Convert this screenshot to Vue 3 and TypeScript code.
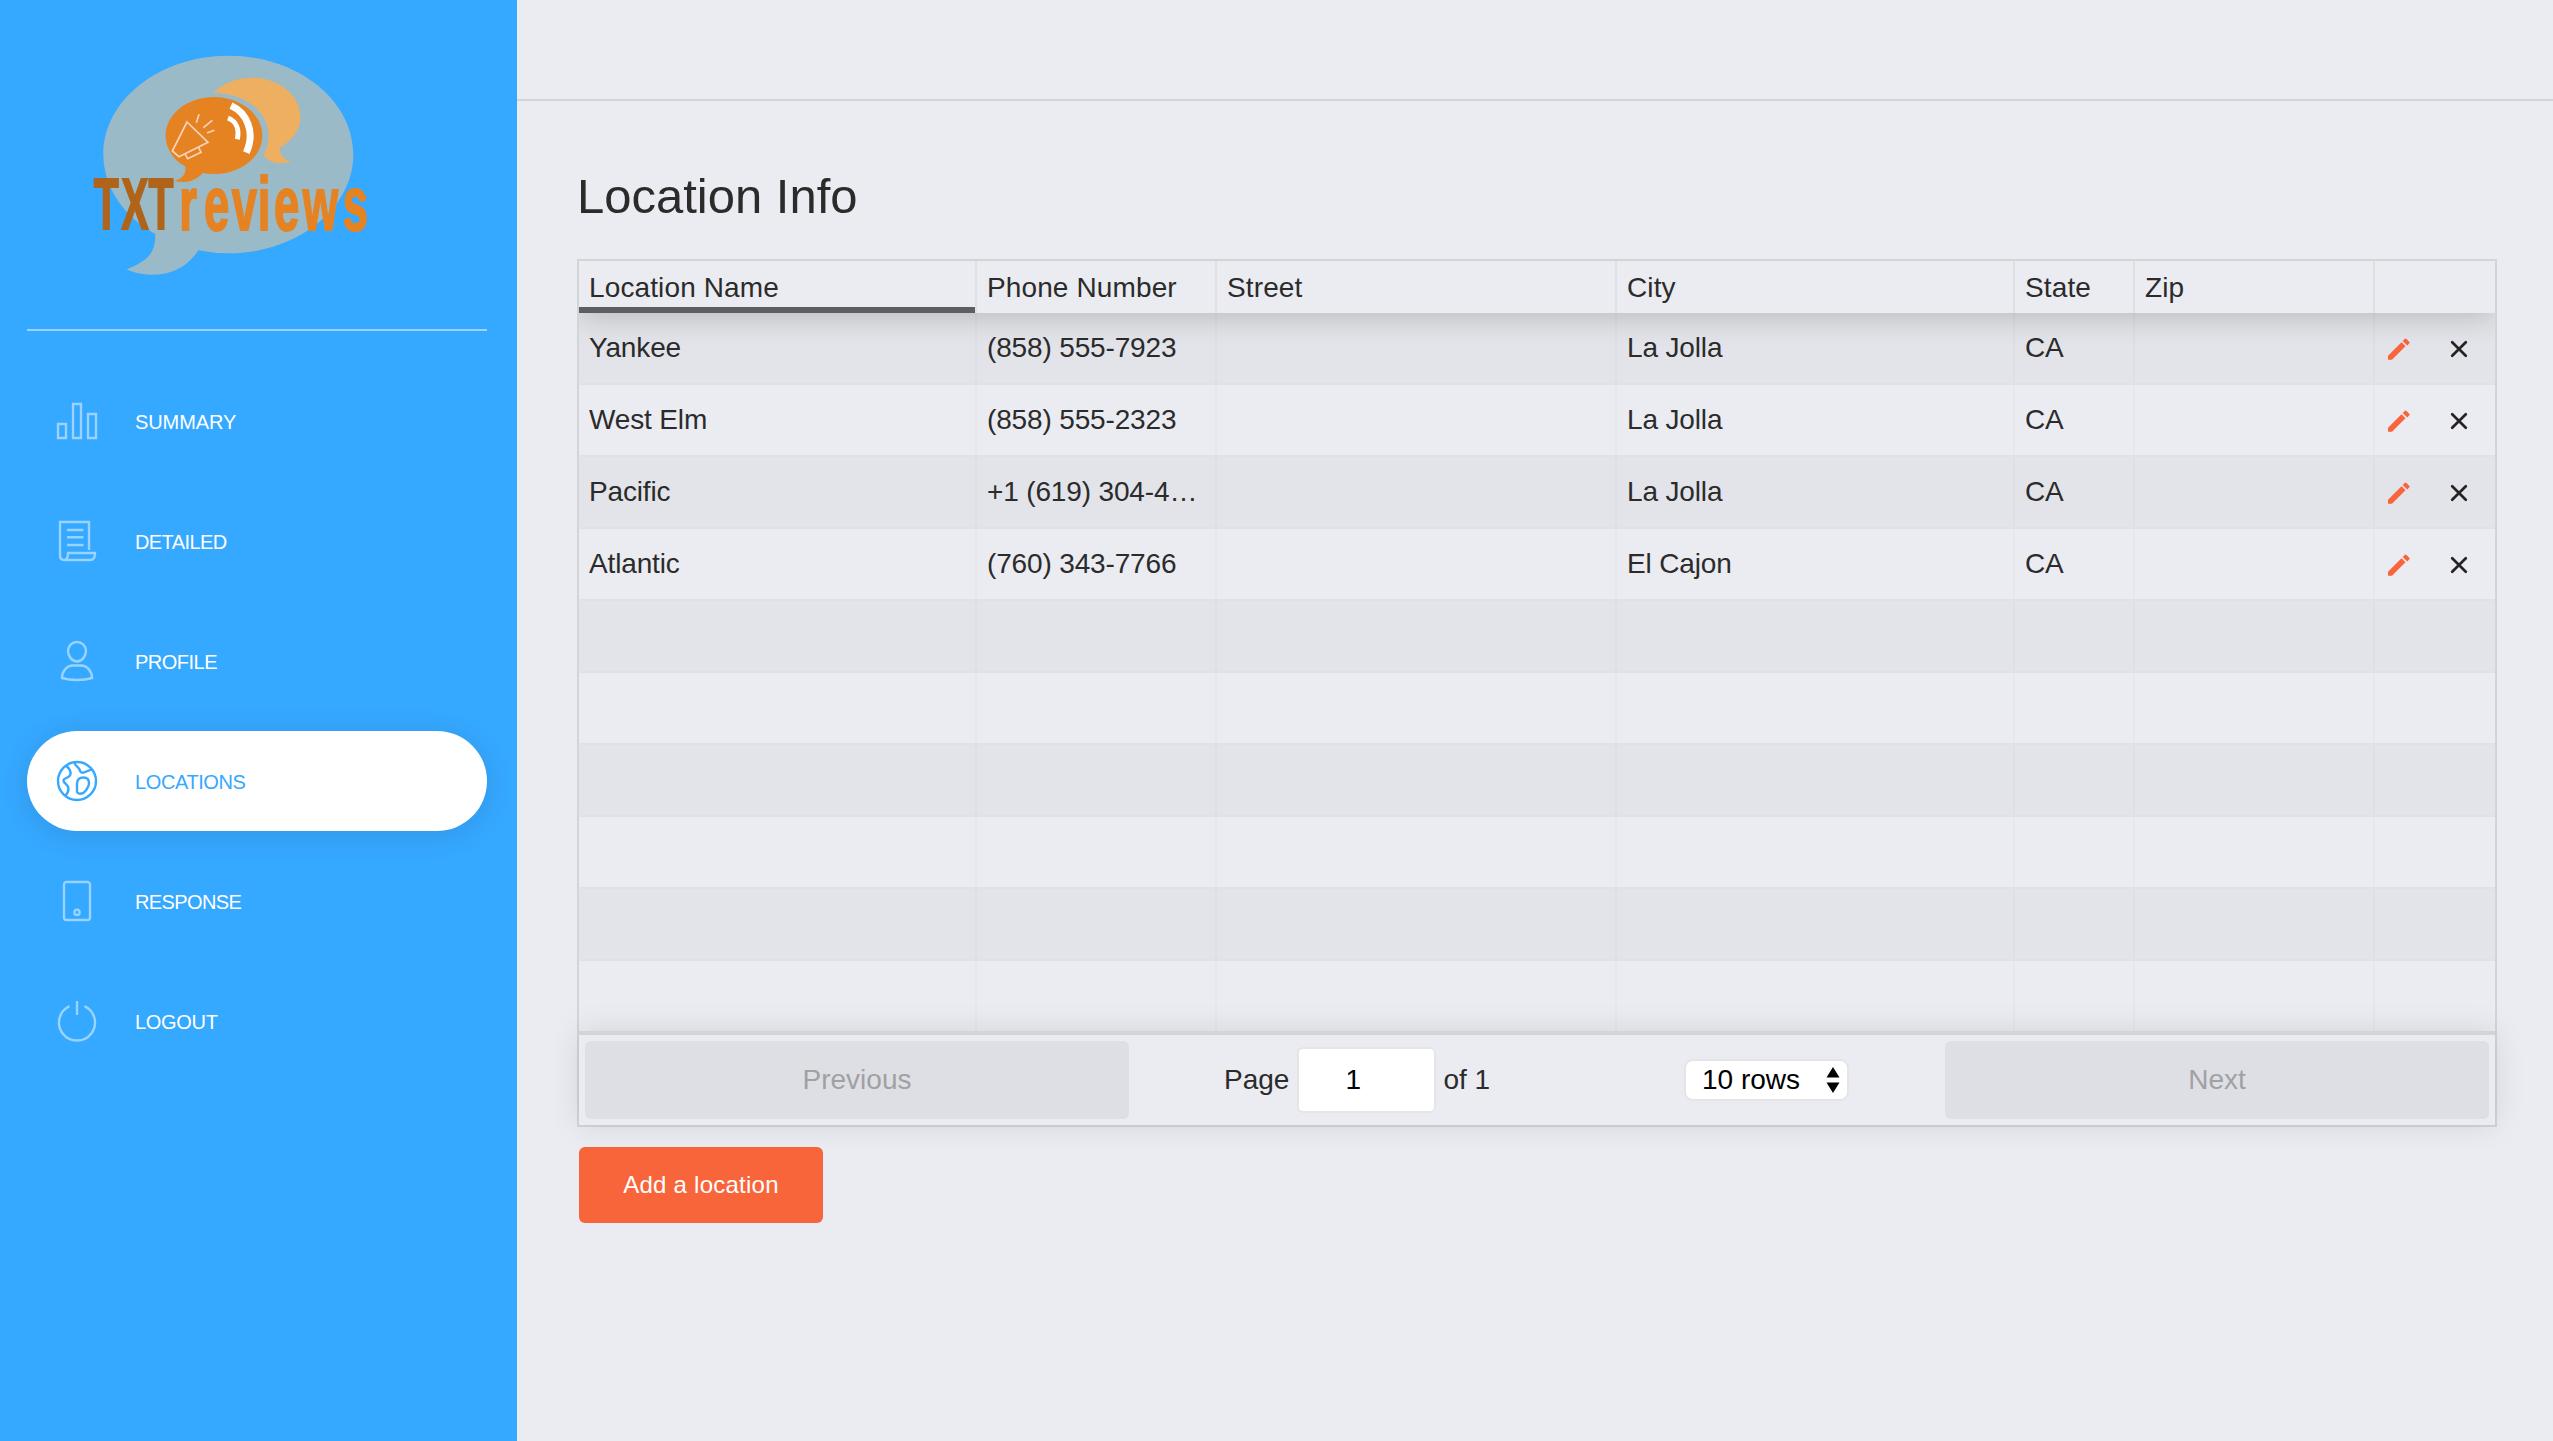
<script setup lang="ts">
interface NavItem {
  label: string
  paths: string[]
  spacing: number
  active?: boolean
}

interface Location {
  name: string
  phone: string
  street: string
  city: string
  state: string
  zip: string
}

const navItems: NavItem[] = [
  { label: 'SUMMARY', spacing: -0.1, paths: ['M1 23h8v14H1z', 'M16 3h8v34h-8z', 'M31 13h8v24h-8z'] },
  {
    label: 'DETAILED',
    spacing: -0.6,
    paths: [
      'M32 29V1H3v33c0 3 1.500 5 4 5s4-2 4-7h27c0 4-1.500 7-5 7H7',
      'M10 9h16.500M10 16.300h16.500M10 24h16.500',
    ],
  },
  {
    label: 'PROFILE',
    spacing: -0.5,
    paths: [
      'M20 1c5 0 9 4 9 9s-4 10.500-9 10.500S11 15 11 10s4-9 9-9z',
      'M5 37c0-7 5-12.500 11-12.500h8c6 0 11 5.500 11 12.500-5 1.500-10 2-15 2s-10-.500-15-2z',
    ],
  },
  {
    label: 'LOCATIONS',
    spacing: -0.4,
    active: true,
    paths: [
      'M20 1a19 19 0 1 1 0 38a19 19 0 1 1 0-38z',
      'M9.500 5c3 2.500 4.300 4.500 4 8-.300 4.500-7 3.500-7 6.500s5 4 5 8-1 5-3 7',
      'M17.500 2c.500 3 4 3.500 5 6.500 1 3 2 3.500 4 3l8-3',
      'M20 30V22.500c0-4 2.500-6 6.500-6s5.500 2.500 5.500 5.500-2 6-4 8.500c-2 2.500-8 3.500-8-.500z',
    ],
  },
  {
    label: 'RESPONSE',
    spacing: -0.6,
    paths: [
      'M9.500 1h21a2.500 2.500 0 0 1 2.500 2.500v33a2.500 2.500 0 0 1-2.500 2.500h-21A2.500 2.500 0 0 1 7 36.500v-33A2.500 2.500 0 0 1 9.500 1z',
      'M20 28.800a2.600 2.600 0 1 1 0 5.200a2.600 2.600 0 1 1 0-5.200z',
    ],
  },
  { label: 'LOGOUT', spacing: -0.3, paths: ['M12.500 5.200A18 18 0 1 0 27.500 5.200', 'M20 0v14'] },
]

const headers: string[] = ['Location Name', 'Phone Number', 'Street', 'City', 'State', 'Zip', '']

const locations: Location[] = [
  { name: 'Yankee', phone: '(858) 555-7923', street: '', city: 'La Jolla', state: 'CA', zip: '' },
  { name: 'West Elm', phone: '(858) 555-2323', street: '', city: 'La Jolla', state: 'CA', zip: '' },
  { name: 'Pacific', phone: '+1 (619) 304-4410', street: '', city: 'La Jolla', state: 'CA', zip: '' },
  { name: 'Atlantic', phone: '(760) 343-7766', street: '', city: 'El Cajon', state: 'CA', zip: '' },
]

const pageSize = 10
const emptyRows = pageSize - locations.length
</script>

<template>
  <div class="layout">
    <aside class="sidebar">
      <div class="brand">
        <svg class="logo" viewBox="0 0 960 750" width="320" height="250">
          <path
            fill="#9abac7"
            d="M475 47C682 47 850 180 850 343S682 640 475 640Q428 640 385 631C345 690 295 704 245 704C218 704 190 698 170 688C235 661 256 640 256 582C160 530 100 440 100 343C100 180 268 47 475 47z"
          />
          <path
            fill="#efaf60"
            d="M430 158C462 128 503 113 546 113C626 113 691 165 691 231C691 267 671 298 629 324C630 345 641 358 662 363C634 376 599 370 581 346C594 322 597 297 595 275C588 208 520 160 430 158z"
          />
          <path
            fill="#e58323"
            d="M432 171C512 171 577 223 577 287S512 402 432 402Q414 402 398 399C376 424 350 430 314 423C340 413 348 403 346 379C308 359 287 323 287 287C287 223 352 171 432 171z"
          />
          <path fill="none" stroke="#f8d3b8" stroke-width="5" d="M351 246L414 307L327 350L307 333zM346 343L353 356L393 337L386 323M379 248l8-25M400 263l27-22M411 279l22-8" />
          <path fill="none" stroke="#fff" stroke-width="21" d="M483 197C530 218 557 275 529 338" />
          <path fill="none" stroke="#fff" stroke-width="15" d="M474 234C500 244 508 270 502 298" />
          <text class="logo-text" transform="scale(.56 1)" x="127 275 421" y="568" font-size="219" fill="#b06419" stroke="#b06419">TXT</text>
          <text class="logo-text" transform="scale(.6 1)" x="546 670 809 939 1020 1164 1364" y="570" font-size="227" fill="#e58323" stroke="#e58323">reviews</text>
        </svg>
      </div>
      <nav class="nav">
        <a v-for="item in navItems" :key="item.label" class="nav-item" :class="{ active: item.active }">
          <svg class="nav-icon" viewBox="0 0 40 40" width="40" height="40">
            <path v-for="d in item.paths" :key="d" :d="d" />
          </svg>
          <span :style="{ letterSpacing: item.spacing + 'px' }">{{ item.label }}</span>
        </a>
      </nav>
    </aside>

    <main class="main">
      <header class="topbar"></header>
      <section class="content">
        <h1 class="title">Location Info</h1>
        <div class="table">
          <div class="grid-area">
            <div class="row head">
              <div v-for="(h, i) in headers" :key="i" class="cell" :class="{ sorted: i === 0 }">{{ h }}</div>
            </div>
            <div v-for="loc in locations" :key="loc.name" class="row body">
              <div class="cell">{{ loc.name }}</div>
              <div class="cell">{{ loc.phone }}</div>
              <div class="cell">{{ loc.street }}</div>
              <div class="cell">{{ loc.city }}</div>
              <div class="cell">{{ loc.state }}</div>
              <div class="cell">{{ loc.zip }}</div>
              <div class="cell actions">
                <svg width="24" height="24" viewBox="0 0 24 24">
                  <path fill="#f9653b" d="M1 18.700L14.500 5.200l4 4L5 22.700H1zM15.700 4l2-2a1.200 1.200 0 0 1 1.800 0l2.700 2.700a1.200 1.200 0 0 1 0 1.800l-2 2z" />
                </svg>
                <svg width="24" height="24" viewBox="0 0 24 24">
                  <path fill="none" stroke="#252422" stroke-width="2.700" stroke-linecap="round" d="M5.200 5.200l13.600 13.600M18.800 5.200L5.200 18.800" />
                </svg>
              </div>
            </div>
            <div v-for="n in emptyRows" :key="n" class="row body">
              <div v-for="(h, i) in headers" :key="i" class="cell"></div>
            </div>
          </div>
          <div class="pager">
            <button class="page-btn" disabled>Previous</button>
            <div class="page-center">
              <div class="page-info">
                <span>Page</span>
                <span class="page-input">1</span>
                <span>of 1</span>
              </div>
              <div class="page-size">
                <span>10 rows</span>
                <svg width="14" height="26" viewBox="0 0 14 26">
                  <path d="M7 0l6.500 10.500H.500zM7 26L.500 15.500h13z" />
                </svg>
              </div>
            </div>
            <button class="page-btn" disabled>Next</button>
          </div>
        </div>
        <button class="add">Add a location</button>
      </section>
    </main>
  </div>
</template>

<style>
body {
  background: #ebecf1;
}
</style>

<style scoped>
* {
  box-sizing: border-box;
}
.layout {
  display: flex;
  width: 2553px;
  height: 1441px;
  overflow: hidden;
  background: #ebecf1;
  color: #2b2b2b;
  font-family: "Liberation Sans", Arial, sans-serif;
  font-size: 28px;
}
.sidebar {
  width: 517px;
  flex: none;
  padding: 0 30px 0 27px;
  background: #35a8ff;
}
.brand {
  height: 331px;
  padding: 40px 0 0 43px;
  border-bottom: 2px solid #9bd4ff;
}
.logo {
  display: block;
}
.logo-text {
  font-family: "Liberation Sans", Arial, sans-serif;
  font-weight: 700;
  stroke-width: 6px;
}
.nav {
  display: flex;
  flex-direction: column;
  gap: 20px;
  padding-top: 40px;
}
.nav-item {
  display: flex;
  align-items: center;
  gap: 38px;
  height: 100px;
  padding-left: 30px;
  border-radius: 50px;
  color: #fff;
  font-size: 20px;
  line-height: 30px;
}
.nav-item span {
  padding-top: 2px;
}
.nav-icon {
  fill: none;
  stroke: currentColor;
  stroke-width: 2.4;
  overflow: visible;
  opacity: 0.5;
}
.active {
  background: #fff;
  color: #35a8ff;
  box-shadow: 0 4px 30px rgba(0, 0, 0, 0.1);
}
.active .nav-icon {
  opacity: 1;
}
.main {
  flex: 1;
}
.topbar {
  height: 101px;
  border-bottom: 2px solid #d4d5d9;
}
.content {
  padding: 65px 56px 0 60px;
}
.title {
  margin: 0 0 33px;
  height: 60px;
  font-size: 49px;
  font-weight: 400;
  line-height: 60px;
}
.table {
  border: 2px solid rgba(0, 0, 0, 0.1);
}
.grid-area {
  height: 770px;
  overflow: hidden;
}
.row {
  display: grid;
  grid-template-columns: 398px 240px 400px 398px 120px 240px 120px;
}
.cell {
  min-width: 0;
  padding: 0 10px;
  overflow: hidden;
  white-space: nowrap;
  text-overflow: ellipsis;
  border-right: 2px solid rgba(0, 0, 0, 0.02);
}
.cell:last-child {
  border-right: 0;
}
.head {
  position: relative;
  height: 52px;
  line-height: 54px;
  letter-spacing: 0.12px;
  box-shadow: 0 4px 30px rgba(0, 0, 0, 0.19);
}
.head .cell {
  border-right-color: rgba(0, 0, 0, 0.05);
}
.sorted {
  box-shadow: inset 0 -6px rgba(0, 0, 0, 0.6);
}
.body {
  height: 72px;
  line-height: 69px;
  letter-spacing: -0.15px;
  border-bottom: 2px solid rgba(0, 0, 0, 0.045);
}
.body:nth-child(even) {
  background: rgba(0, 0, 0, 0.03);
  background-clip: padding-box;
}
.actions {
  display: flex;
  align-items: center;
  gap: 36px;
  padding: 2px 0 0 12px;
}
.pager {
  position: relative;
  display: flex;
  justify-content: space-between;
  height: 94px;
  padding: 6px;
  border-top: 4px solid rgba(0, 0, 0, 0.1);
  box-shadow: 0 0 30px rgba(0, 0, 0, 0.1);
}
.page-btn {
  width: 544px;
  height: 78px;
  padding: 0;
  border: 0;
  border-radius: 6px;
  background: #dedfe4;
  color: #a0a1a3;
  font: inherit;
}
.page-center {
  display: flex;
  align-items: center;
  flex: 1;
  padding: 0 96px 0 95px;
  justify-content: space-between;
}
.page-info {
  display: flex;
  align-items: center;
}
.page-input {
  width: 139px;
  height: 66px;
  margin: 0 7px 0 8px;
  padding-left: 46px;
  border: 2px solid #e5e5e6;
  border-radius: 6px;
  background: #fff;
  color: #000;
  line-height: 61px;
}
.page-size {
  display: flex;
  align-items: center;
  justify-content: space-between;
  width: 165px;
  height: 42px;
  padding: 0 7px 0 16px;
  border: 2px solid #e5e5e6;
  border-radius: 9px;
  background: #fff;
  color: #000;
}
.add {
  display: block;
  width: 244px;
  height: 76px;
  margin: 20px 0 0 2px;
  padding: 0;
  border: 0;
  border-radius: 6px;
  background: #f9653b;
  color: #fff;
  font: inherit;
  font-size: 24px;
  letter-spacing: 0.25px;
}
</style>
